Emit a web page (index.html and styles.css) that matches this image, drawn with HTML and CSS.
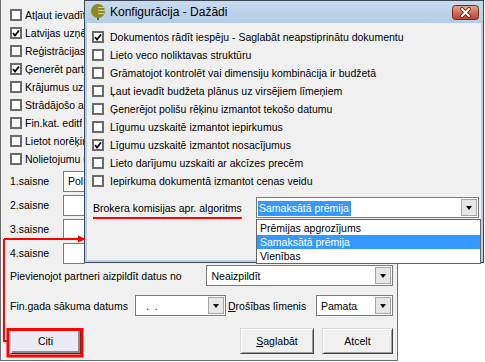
FILE: index.html
```html
<!DOCTYPE html>
<html lang="lv">
<head>
    <meta charset="UTF-8">
    <title>Konfigurācija - Dažādi</title>
    <link rel="stylesheet" href="styles.css">
</head>
<body>

<!-- Background window -->
<div class="bgwin">
    <!-- Left part, the rest is covered by the dialog -->
    <div class="bg-side">
        <div class="chk-list">
            <div class="chk"><span class="box"></span><span class="cut">Atļaut ievadīt</span></div>
            <div class="chk"><span class="box checked"><svg viewBox="0 0 8 8"><polyline points="1,4 3,6.5 7,1.5"/></svg></span><span class="cut">Latvijas uzņē</span></div>
            <div class="chk"><span class="box"></span><span class="cut">Reģistrācijas</span></div>
            <div class="chk"><span class="box checked"><svg viewBox="0 0 8 8"><polyline points="1,4 3,6.5 7,1.5"/></svg></span><span class="cut">Ģenerēt part</span></div>
            <div class="chk"><span class="box"></span><span class="cut">Krājumus uzs</span></div>
            <div class="chk"><span class="box"></span><span class="cut">Strādājošo a</span></div>
            <div class="chk"><span class="box"></span><span class="cut">Fin.kat. editf</span></div>
            <div class="chk"><span class="box"></span><span class="cut">Lietot norēķin</span></div>
            <div class="chk"><span class="box"></span><span class="cut">Nolietojumu u</span></div>
        </div>

        <div class="links">
            <div class="link-row"><span class="link-lbl">1.saisne</span><span class="field">Poli</span></div>
            <div class="link-row"><span class="link-lbl">2.saisne</span><span class="field"></span></div>
            <div class="link-row"><span class="link-lbl">3.saisne</span><span class="field"></span></div>
            <div class="link-row"><span class="link-lbl">4.saisne</span><span class="field"></span></div>
        </div>
    </div>

    <div class="form-row">
        <span class="lbl lbl-partner">Pievienojot partneri aizpildīt datus no</span>
        <span class="combo combo-partner"><span class="combo-val">Neaizpildīt</span><span class="drop-btn"><i></i></span></span>
    </div>
    <div class="form-row row-fin">
        <span class="lbl lbl-fin">Fin.gada sākuma datums</span>
        <span class="combo combo-date"><span class="combo-val date-val">.&nbsp;&nbsp;.</span><span class="drop-btn"><i></i></span></span>
        <span class="lbl lbl-level"><u>D</u>rošības līmenis</span>
        <span class="combo combo-level"><span class="combo-val">Pamata</span><span class="drop-btn"><i></i></span></span>
    </div>

    <div class="btn-row">
        <button class="btn btn-default">Citi</button>
        <button class="btn btn-save"><u>S</u>aglabāt</button>
        <button class="btn btn-cancel">Atcelt</button>
    </div>
</div>

<!-- Dialog window -->
<div class="dialog">
    <div class="titlebar">
        <svg class="app-icon" viewBox="0 0 16 16">
            <rect x="7" y="11" width="2" height="5" fill="#6f6d12"/>
            <circle cx="8" cy="7" r="7" fill="#8d8b1f"/>
            <g stroke="#d7d6a8" stroke-width="1">
                <line x1="8" y1="3.5" x2="14" y2="3.5"/>
                <line x1="8" y1="6.5" x2="15" y2="6.5"/>
                <line x1="8" y1="9.5" x2="14" y2="9.5"/>
            </g>
        </svg>
        <span class="title">Konfigurācija - Dažādi</span>
        <svg class="close" viewBox="0 0 27 15">
            <defs>
                <linearGradient id="cg" x1="0" y1="0" x2="0" y2="1">
                    <stop offset="0" stop-color="#e9a594"/>
                    <stop offset="0.5" stop-color="#d2705c"/>
                    <stop offset="1" stop-color="#c0432c"/>
                </linearGradient>
            </defs>
            <rect x="0.5" y="0.5" width="26" height="14" rx="3" fill="url(#cg)" stroke="#6e2a1d"/>
            <path d="M10 4 L17 11 M17 4 L10 11" stroke="#5b1d12" stroke-width="3.6" stroke-linecap="round"/>
            <path d="M10 4 L17 11 M17 4 L10 11" stroke="#fff" stroke-width="2" stroke-linecap="round"/>
        </svg>
    </div>
    <div class="dialog-body">
        <div class="chk"><span class="box checked"><svg viewBox="0 0 8 8"><polyline points="1,4 3,6.5 7,1.5"/></svg></span>Dokumentos rādīt iespēju - Saglabāt neapstiprinātu dokumentu</div>
        <div class="chk"><span class="box"></span>Lieto veco noliktavas struktūru</div>
        <div class="chk"><span class="box"></span>Grāmatojot kontrolēt vai dimensiju kombinācija ir budžetā</div>
        <div class="chk"><span class="box"></span>Ļaut ievadīt budžeta plānus uz virsējiem līmeņiem</div>
        <div class="chk"><span class="box"></span>Ģenerējot polišu rēķinu izmantot tekošo datumu</div>
        <div class="chk"><span class="box"></span>Līgumu uzskaitē izmantot iepirkumus</div>
        <div class="chk"><span class="box checked"><svg viewBox="0 0 8 8"><polyline points="1,4 3,6.5 7,1.5"/></svg></span>Līgumu uzskaitē izmantot nosacījumus</div>
        <div class="chk"><span class="box"></span>Lieto darījumu uzskaiti ar akcīzes precēm</div>
        <div class="chk"><span class="box"></span>Iepirkuma dokumentā izmantot cenas veidu</div>

        <div class="broker-row">
            <span class="broker-lbl"><span class="marked">Brokera komisijas apr. algoritms</span></span>
            <span class="combo combo-broker"><span class="combo-val"><span class="sel">Samaksātā prēmija</span></span><span class="drop-btn"><i></i></span></span>
        </div>
    </div>
</div>

<!-- Open dropdown list -->
<div class="droplist">
    <div class="drop-item">Prēmijas apgrozījums</div>
    <div class="drop-item active">Samaksātā prēmija</div>
    <div class="drop-item">Vienības</div>
</div>

<!-- Red annotation -->
<svg class="annot" viewBox="0 0 485 362">
    <path d="M4 239 V341 H8 M4 239 H80" stroke="#f00" stroke-width="2" fill="none"/>
    <polygon points="78,235.5 86,239 78,242.5" fill="#f00"/>
    <rect x="8" y="329.5" width="74" height="26.5" stroke="#f00" stroke-width="3" fill="none"/>
</svg>

</body>
</html>
```

FILE: styles.css
```css
/* Global */
* {
    box-sizing: border-box;
}
body {
    margin: 0;
    width: 485px;
    height: 362px;
    overflow: hidden;
    position: relative;
    background: #fff;
    font-family: 'Liberation Sans', Arial, sans-serif;
    font-size: 10.5px;
    color: #000;
}

/* Checkboxes */
.chk {
    display: flex;
    align-items: center;
    height: 18px;
    white-space: nowrap;
}
.box {
    width: 12px;
    height: 12px;
    flex: none;
    background: #fff;
    border: 2px solid #6a6a6a;
    margin-right: 3px;
    display: flex;
    align-items: center;
    justify-content: center;
}
.box svg {
    width: 8px;
    height: 8px;
}
.box polyline {
    fill: none;
    stroke: #000;
    stroke-width: 1.8;
}

/* Background window */
.bgwin {
    position: absolute;
    left: 0;
    top: 0;
    width: 398px;
    height: 361px;
    background: #f0f0f0;
    border: 1px solid #6f6f6f;
    border-top: none;
    padding: 6px 4px 0 9px;
}
.bg-side {
    width: 75px;
    overflow: hidden;
}
.cut {
    overflow: hidden;
}
.links {
    margin-top: 1px;
}
.link-row {
    display: flex;
    align-items: center;
    height: 24px;
}
.link-lbl {
    width: 53px;
    flex: none;
}
.field {
    width: 22px;
    flex: none;
    height: 21px;
    background: #fff;
    border: 1px solid #7a7a7a;
    border-right: none;
    padding: 3px 0 0 4px;
    white-space: nowrap;
    overflow: hidden;
}

.form-row {
    display: flex;
    align-items: center;
    height: 21px;
}
.row-fin {
    margin-top: 9px;
}
.lbl {
    white-space: nowrap;
}
.lbl-partner {
    width: 197px;
}
.lbl-fin {
    width: 125px;
}
.lbl-level {
    width: 88px;
    margin-left: 2px;
}

/* Combo boxes */
.combo {
    display: flex;
    align-items: center;
    height: 21px;
    background: #fff;
    border: 1px solid #7a7a7a;
    padding-left: 4px;
}
.combo-val {
    flex: 1;
    white-space: nowrap;
}
.date-val {
    padding-left: 6px;
}
.combo-partner {
    width: 187px;
}
.combo-date {
    width: 91px;
}
.combo-level {
    width: 77px;
}
.drop-btn {
    width: 16px;
    height: 17px;
    margin-right: 1px;
    background: #e6e6e6;
    border: 1px solid #a5a5a5;
    display: flex;
    align-items: center;
    justify-content: center;
}
.drop-btn i {
    width: 0;
    height: 0;
    border-left: 3.5px solid transparent;
    border-right: 3.5px solid transparent;
    border-top: 4px solid #000;
}

/* Buttons */
.btn-row {
    display: flex;
    margin-top: 12px;
}
.btn {
    height: 26px;
    font-family: inherit;
    font-size: inherit;
    color: #000;
    background: #f0f0f0;
    border: 1px solid;
    border-color: #dadada #404040 #404040 #dadada;
    box-shadow: inset 1px 1px #fff, inset -1px -1px #a0a0a0;
    padding: 0;
}
.btn-default {
    width: 71px;
    background: #ebebf7;
    border-color: #c8c8d0 #303030 #303030 #c8c8d0;
    box-shadow: inset 1px 1px #fff, inset -2px -2px #8a8a8a;
}
.btn-save {
    width: 74px;
    margin-left: auto;
}
.btn-cancel {
    width: 71px;
    margin-left: 8px;
}

/* Dialog */
.dialog {
    position: absolute;
    left: 84px;
    top: 0;
    width: 400px;
    height: 263px;
    display: flex;
    flex-direction: column;
    background: #b6cfea;
    border: 1px solid #3d4754;
    padding: 0 2px 2px;
}
.titlebar {
    height: 22px;
    flex: none;
    display: flex;
    align-items: center;
    margin: 0 -2px;
    padding: 0 4px 0 5px;
    background: linear-gradient(#c8dbf0, #b2cbe7);
}
.app-icon {
    width: 16px;
    height: 16px;
    margin-right: 4px;
}
.title {
    flex: 1;
    font-size: 12px;
}
.close {
    width: 27px;
    height: 15px;
}
.dialog-body {
    flex: 1;
    background: #f0f0f0;
    padding: 5px 0 0 5px;
}
.dialog-body .box {
    margin-right: 6px;
}

.broker-row {
    display: flex;
    align-items: center;
    height: 21px;
    margin-top: 7px;
}
.broker-lbl {
    width: 164px;
    padding-left: 1px;
}
.marked {
    text-decoration: underline;
    text-decoration-color: #f00;
    text-decoration-thickness: 2px;
    text-underline-offset: 5px;
}
.combo-broker {
    width: 223px;
    padding-left: 1px;
}
.sel {
    background: #3399ff;
    color: #fff;
    padding: 1px 2px 2px 1px;
}

/* Dropdown list */
.droplist {
    position: absolute;
    left: 256px;
    top: 219px;
    width: 225px;
    height: 45px;
    background: #fff;
    border: 1px solid #646464;
    padding-top: 1px;
}
.drop-item {
    height: 14px;
    line-height: 14px;
    padding-left: 3px;
    white-space: nowrap;
}
.drop-item.active {
    background: #3399ff;
    color: #fff;
}

/* Annotation */
.annot {
    position: absolute;
    left: 0;
    top: 0;
    width: 485px;
    height: 362px;
    pointer-events: none;
}
```
